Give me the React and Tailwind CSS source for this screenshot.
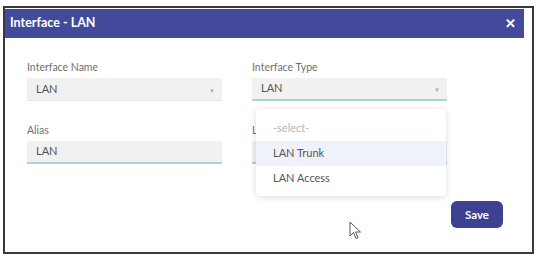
import React from 'react';

const font = { fontFamily: 'Lato, "Open Sans", sans-serif' };

function Field({ label, value, select, underline }) {
  return (
    <div className="w-[195px]">
      <div className="h-[16px] text-[10.5px] leading-[16px] text-[#707070]">{label}</div>
      <div
        className={`mt-[3px] flex h-[23px] items-center justify-between bg-[#f1f1f1] pl-[9px] pr-[7px] text-[11px] text-[#555] ${
          underline ? 'border-b-2 border-[#a9d2da]' : 'border-b border-[#e6e6e6]'
        }`}
      >
        <span>{value}</span>
        {select && <span className="mt-[2px] text-[6px] text-[#aaa]">▼</span>}
      </div>
    </div>
  );
}

function Cursor() {
  return (
    <svg width="13" height="19" viewBox="0 0 13 19" className="absolute left-[349px] top-[221px]">
      <path d="M1 1 L1 15 L4.5 11.5 L7 17.5 L9 16.6 L6.6 11 L11.5 11 Z" fill="#fff" stroke="#555" strokeWidth="1" strokeLinejoin="round" />
    </svg>
  );
}

export default function App() {
  return (
    <div className="relative h-[257px] w-[542px] bg-white" style={font}>
      <div className="absolute left-[3px] top-[6px] h-[248px] w-[531px] border-2 border-[#3a3a3a] pt-[1px]">
        <div className="flex h-[29px] w-[519px] items-center justify-between bg-[#434a9b] pl-[5px] pr-[8px]">
          <span className="text-[12.5px] font-bold text-white">Interface - LAN</span>
          <span className="text-[13px] font-bold leading-none text-white">✕</span>
        </div>

        <div className="relative px-[22px] pt-[21px]">
          <div className="flex gap-[30px]">
            <Field label="Interface Name" value="LAN" select />
            <Field label="Interface Type" value="LAN" select underline />
          </div>
          <div className="mt-[21px] flex gap-[30px]">
            <Field label="Alias" value="LAN" underline />
            {/* label under the open menu: only its first letter shows */}
            <Field label="L" value="" underline />
          </div>

          <div className="absolute left-[251px] top-[71px] w-[190px] rounded-sm bg-white pb-[5px] pt-[7px] text-[11px] shadow-[0_1px_6px_rgba(0,0,0,0.15)]">
            <div className="flex h-[25px] items-center pl-[17px] text-[#b5b5b5]">-select-</div>
            <div className="flex h-[25px] items-center bg-[#eff2fa] pl-[17px] text-[#555]">LAN Trunk</div>
            <div className="flex h-[25px] items-center pl-[17px] text-[#555]">LAN Access</div>
          </div>

          <div className="mt-[37px] flex justify-end pr-[7px]">
            <button className="h-[27px] w-[52px] rounded-md bg-[#3c4190] text-[11.5px] font-bold text-white">Save</button>
          </div>
        </div>
      </div>
      <Cursor />
    </div>
  );
}
